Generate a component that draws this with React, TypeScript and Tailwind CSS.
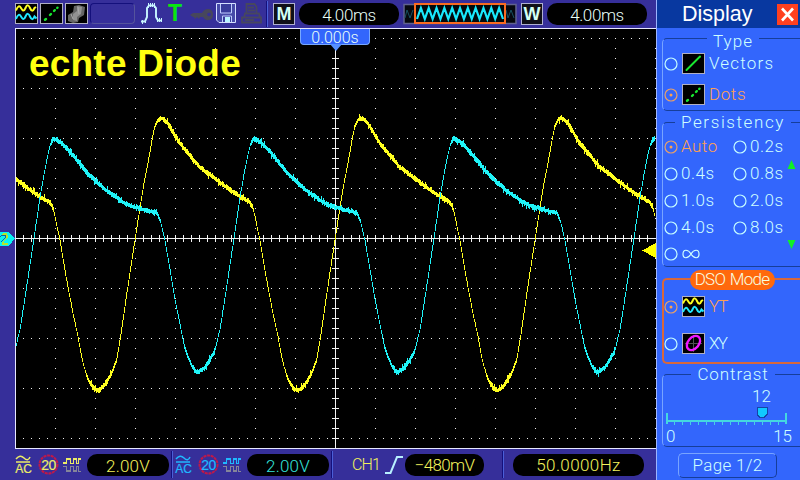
import type { ReactNode } from 'react';

type Point = [number, number];

const LCD = "font-['Roboto','Liberation_Sans',sans-serif] font-light leading-none whitespace-nowrap";

const YELLOW: Point[] = [
  [-40, 118], [-37, 118], [-32, 123], [-20, 143], [0, 167], [15, 178], [28, 188], [40, 196], [50, 202], [53, 207],
  [60, 240], [66, 276], [73, 313], [78, 336], [82, 358], [86, 373], [90, 382], [94, 388], [97, 390], [101, 388],
  [105, 384], [111, 374], [117, 358], [121, 334], [125, 306], [130, 272], [135, 240], [140, 207], [144, 183],
  [148, 163], [152, 140], [155, 125], [158, 119], [160, 118],
];

const CYAN: Point[] = [
  [-1, 371], [5, 367], [10, 359], [15, 350], [20, 329], [24, 304], [29, 271], [34, 238], [40, 197], [44, 174],
  [48, 154], [51, 142], [54, 138], [60, 141], [69, 150], [78, 161], [86, 171], [95, 180], [105, 189], [115, 196],
  [122, 201], [130, 205], [140, 208], [150, 211], [157, 212], [160, 219], [165, 240], [170, 269], [175, 299],
  [180, 324], [184, 344], [188, 356], [193, 367], [197, 372], [199, 371],
];

function sample(points: Point[], x: number): number {
  const start = points[0][0];
  const t = ((((x - start) % 200) + 200) % 200) + start;
  for (let i = 1; i < points.length; i++) {
    const [x0, y0] = points[i - 1];
    const [x1, y1] = points[i];
    if (t <= x1) return y0 + ((y1 - y0) * (t - x0)) / (x1 - x0);
  }
  return points[points.length - 1][1];
}

// Each pixel column becomes a vertical bar: thick and noisy where the signal
// is slow, thin with gaps where it is steep.
function trace(points: Point[], seed: number): string {
  let s = seed;
  const rnd = () => {
    s = (s * 1103515245 + 12345) % 2147483648;
    return s / 2147483648;
  };
  let d = '';
  for (let x = 16; x < 655; x++) {
    const a = sample(points, x);
    const b = sample(points, x + 1);
    const slope = Math.abs(b - a);
    let top = Math.round(Math.min(a, b));
    let bottom = Math.round(Math.max(a, b));
    if (slope < 2) {
      top -= 1 + Math.floor(rnd() * 1.8);
      bottom += 2 + Math.floor(rnd() * 1.6);
      if (rnd() > 0.9) top -= 2;
      if (rnd() > 0.9) bottom += 2;
    } else if (slope < 3.5) {
      bottom += 2;
    } else if (rnd() > 0.5) {
      top += 1;
    }
    if (bottom <= top) bottom = top + 1;
    d += `M${x} ${top}h1V${bottom}h-1z`;
  }
  return d;
}

const rowsY = [38, 88, 138, 188, 288, 338, 388, 438];
const colsX = Array.from({ length: 16 }, (_, i) => 55 + i * 40).filter((x) => x !== 335);
let grid = '';
rowsY.forEach((y) => {
  for (let x = 23; x < 655; x += 8) grid += `M${x} ${y}h1v1h-1z`;
});
colsX.forEach((x) => {
  for (let y = 48; y < 447; y += 10) grid += `M${x} ${y}h1v1h-1z`;
});
let axes = 'M16 238h640v1h-640zM335 50h1v398h-1z';
for (let x = 23; x < 655; x += 8) axes += `M${x} 235h1v7h-1z`;
for (let y = 58; y < 447; y += 10) axes += `M332 ${y}h7v1h-7z`;

const YELLOW_PATH = trace(YELLOW, 17);
const CYAN_PATH = trace(CYAN, 91);

function Scope() {
  return (
    <svg width="656" height="421" viewBox="0 28 656 421" shapeRendering="crispEdges" className="block">
      <rect x="0" y="28" width="656" height="421" fill="#362f9a" />
      <rect x="15" y="28" width="641" height="421" fill="#e8e8ff" />
      <rect x="16" y="29" width="640" height="419" fill="#000" />
      <path d={grid} fill="#f0f0f0" />
      <path d={axes} fill="#f4f4f4" />
      <path d={YELLOW_PATH} fill="#ffff20" />
      <path d={CYAN_PATH} fill="#20f4f8" />
      <path d="M656 243v15l-14-7.5z" fill="#ff0" />
      <path d="M0 232h9l6 6.5-6 7H0z" fill="#08f4f4" />
      <path d="M1 236l2-2h3l1 2v2l-4 4v2h5" fill="none" stroke="#b5e52c" strokeWidth="1.4" />
      <path d="M0 237l2-2h3v3l-4 4" fill="none" stroke="#17639a" strokeWidth="1" />
    </svg>
  );
}

function IconBox({ children }: { children?: ReactNode }) {
  return (
    <svg width="23" height="21" viewBox="0 0 23 21" className="block shrink-0">
      <rect x=".5" y=".5" width="22" height="20" fill="#000" stroke="#b0b0c4" />
      {children}
    </svg>
  );
}

function WavesIcon() {
  return (
    <IconBox>
      <path d="M1 7.500C3 2.500 4.500 2.500 6 5s2.800 4 4.500 0 3.200-3 4.500 0 2.800 4 4.500 0L21 4" fill="none" stroke="#ff2" strokeWidth="2" />
      <path d="M1 16C3 11 4.500 11 6 13.500s2.800 4 4.500 0 3.200-3 4.500 0 2.800 4 4.500 0l2 2" fill="none" stroke="#20e8ff" strokeWidth="2" />
    </IconBox>
  );
}

function DotsIcon() {
  return (
    <IconBox>
      <path d="M5 16.800l1-.8M10 12l1-1M14 8l.8-.8M17.200 5l.3-.3" stroke="#18e830" strokeWidth="2.400" strokeLinecap="round" />
    </IconBox>
  );
}

function Pill({ className, children }: { className: string; children: ReactNode }) {
  return <div className={`flex h-[22px] shrink-0 items-center justify-center rounded-[10px] bg-black ${className}`}>{children}</div>;
}

function Separator({ className }: { className: string }) {
  return <div className={`w-[2px] shrink-0 border-l border-l-[#14107c] border-r border-r-[#4a5fd8] ${className}`} />;
}

function TopBar() {
  const zig = Array.from({ length: 23 }, (_, i) => `${i ? 'L' : 'M'}${14 + i * 3.91} ${i % 2 ? 5 : 16}`).join('');
  return (
    <div className="flex h-[28px] items-start bg-[#362f9a] pl-[15px] pt-[3px]">
      <WavesIcon />
      <div className="ml-[2px]"><DotsIcon /></div>
      <div className="ml-[2px]">
        <IconBox>
          <path d="M3 18v-6l5-3 1-6 5-1 6 2-1 8-5 3-1 4-5 1z" fill="#666" />
          <path d="M8 17v-6l4-3V3l5 1-1 7-4 3v4z" fill="#929292" />
          <path d="M6 11l2 5M13 4l1 7" stroke="#aaa" strokeWidth="1" />
        </IconBox>
      </div>
      <div className="ml-[2px] h-[21px] w-[45px] rounded border border-[#14107c] border-b-[#55549c] border-r-[#55549c]" />
      <svg width="22" height="22" viewBox="0 0 22 22" className="ml-[6px] block">
        <path d="M0 18.500h4L6 14V5l2-2.500h5L15 5v9l2 3.500h4" fill="none" stroke="#c8f6ff" strokeWidth="1.900" />
        <path d="M1.500 17v4M4.500 16v4M7.500 0v5M9.500 0v4M11.500 0v4M13.500 0v5M16.500 15v4M18.500 15v4M20.500 15v4" fill="none" stroke="#c8f6ff" strokeWidth="1" />
      </svg>
      <div className="ml-[3px] w-[18px] text-center font-['Liberation_Sans',sans-serif] text-[23px] font-bold leading-[21px] text-[#08e810]">T</div>
      <svg width="24" height="15" viewBox="0 0 24 15" className="ml-[6px] mt-[4px] block">
        <path d="M12 6H3L0 8l3 2h1l1 2 2-2 2 2 1-2h3q2 4 5 3 5 0 5-5.500t-5-5.500q-4 0-6 4z" fill="#47475c" />
        <circle cx="19" cy="7.500" r="1.800" fill="#362f9a" />
      </svg>
      <svg width="21" height="21" viewBox="0 0 21 21" className="ml-[2px] block">
        <path d="M.5.5h19v19H3l-2.500-2.500z" fill="#464aa8" stroke="#d4dfff" />
        <path d="M4.500 1v9h11V1M6.500 19v-6h9v6" fill="#383b9b" stroke="#c0ceff" />
        <path d="M9 14h5v5H9z" fill="#b8f4ff" />
      </svg>
      <svg width="22" height="21" viewBox="0 0 22 21" className="ml-[4px] block">
        <path d="M5.500 10V1h8l2 3v6M7 4.500h6M7 7.500h7M4 10.500h14l1 4H3zM1 14.500h19v5H1zM4 17h9" fill="none" stroke="#47475f" strokeWidth="1.800" />
      </svg>
      <Separator className="-mt-[2px] ml-[3px] h-[26px]" />
      <div className="ml-[5px] flex h-[22px] w-[22px] items-center justify-center border border-[#b0b0d0] bg-[#101018] font-['Liberation_Sans',sans-serif] text-[18px] font-bold leading-none text-[#d4fff4]">M</div>
      <Pill className="ml-[4px] w-[100px]"><span className={`${LCD} mt-[2px] text-[17px] tracking-[-0.400px] text-[#e8fff8]`}>4.00ms</span></Pill>
      <svg width="114" height="22" viewBox="0 0 114 22" className="ml-[4px] block">
        <rect x="1" y="1.500" width="112" height="19" fill="#06080e" stroke="#60628f" strokeWidth="1.500" />
        <path d="M2 15l2-8 3 8 3-8M103 7l2 8 3-8 3 8" stroke="#175060" fill="none" />
        <rect x="12" y="1" width="90" height="19" fill="#02090c" />
        <path d={zig} stroke="#18e8fc" strokeWidth="2.200" fill="none" />
        <rect x="12" y="1" width="90" height="19" fill="none" stroke="#fa6b20" strokeWidth="2" />
      </svg>
      <div className="ml-[4px] flex h-[22px] w-[22px] items-center justify-center border border-[#b0b0d0] bg-[#101018] font-['Liberation_Sans',sans-serif] text-[18px] font-bold leading-none text-[#d4fff4]">W</div>
      <Pill className="ml-[4px] w-[100px]"><span className={`${LCD} mt-[2px] text-[17px] tracking-[-0.400px] text-[#e8fff8]`}>4.00ms</span></Pill>
    </div>
  );
}

function ChannelIcons({ color }: { color: string }) {
  return (
    <>
      <div className="flex w-[17px] shrink-0 flex-col items-center" style={{ color }}>
        <svg width="17" height="8" viewBox="0 0 17 8" className="block">
          <path d="M1 4q4-5 8-1t6-1M1 7h14" fill="none" stroke="currentColor" strokeWidth="1.500" />
        </svg>
        <span className="font-['Liberation_Sans',sans-serif] text-[12px] leading-[12px] [-webkit-text-stroke:0.200px]">AC</span>
      </div>
      <div className="relative ml-[6px] flex h-[21px] w-[21px] shrink-0 items-center justify-center" style={{ color }}>
        <svg width="21" height="21" viewBox="0 0 21 21" className="absolute inset-0">
          <circle cx="10.500" cy="10.500" r="9" fill="none" stroke="#c01848" strokeWidth="2" strokeDasharray="3 .7" />
        </svg>
        <span className="relative font-['Liberation_Sans',sans-serif] text-[14px] leading-none tracking-[-0.500px] [-webkit-text-stroke:0.200px]">20</span>
      </div>
      <svg width="18" height="16" viewBox="0 0 18 16" className="ml-[4px] block shrink-0" shapeRendering="crispEdges">
        <path d="M0 6.500h3.500v-5h4v5h3v-5h3v5h2v-5h2.500" fill="none" stroke={color} strokeWidth="1" />
        <path d="M0 5.500h3.500M3.500 2.500h4M10.500 2.500h3M15.500 2.500h2.500" stroke={color} strokeWidth="1" />
        <path d="M0 9.500h3.500v5h4v-5h3v5h3v-5h2v5h2.500M3.500 13.500h4M10.500 13.500h3" fill="none" stroke="#85859a" strokeWidth="1" />
      </svg>
    </>
  );
}

function BottomBar() {
  return (
    <div className="flex h-[31px] items-center bg-[#362f9a] pl-[15px]">
      <ChannelIcons color="#ecec68" />
      <Pill className="ml-[6px] w-[82px]"><span className={`${LCD} mt-[3px] text-[17px] tracking-[0.200px] text-[#f4f45c]`}>2.00V</span></Pill>
      <Separator className="ml-[2px] h-[27px]" />
      <div className="w-[2px] shrink-0" />
      <ChannelIcons color="#20b8ff" />
      <Pill className="ml-[6px] w-[82px]"><span className={`${LCD} mt-[3px] text-[17px] tracking-[0.200px] text-[#34e4dc]`}>2.00V</span></Pill>
      <Separator className="ml-[2px] h-[27px]" />
      <span className={`${LCD} ml-[19px] w-[33px] text-[16px] tracking-[-0.800px] text-[#f4f45c]`}>CH1</span>
      <svg width="19" height="20" viewBox="0 0 19 20" className="block shrink-0">
        <path d="M0 18h5.500L12 2h6" fill="none" stroke="#b8f0ff" strokeWidth="2" />
      </svg>
      <Pill className="ml-px w-[79px]"><span className={`${LCD} mt-px text-[17px] tracking-[-0.700px] text-[#f4f45c]`}>−480mV</span></Pill>
      <Separator className="ml-[18px] h-[27px]" />
      <Pill className="ml-[9px] w-[131px]"><span className={`${LCD} mt-px text-[17px] tracking-[0.400px] text-[#f4f45c]`}>50.0000Hz</span></Pill>
    </div>
  );
}

function Radio({ on = false }: { on?: boolean }) {
  return (
    <svg width="14" height="14" viewBox="0 0 14 14" className="block shrink-0">
      <circle cx="7" cy="7" r="6" fill="none" stroke={on ? '#e8a068' : '#c4fcff'} strokeWidth="1.200" />
      {on && <circle cx="7" cy="7" r="1.500" fill="#ffa050" />}
    </svg>
  );
}

function Section({ title, className, titleClass, children }: { title: string; className: string; titleClass: string; children: ReactNode }) {
  return (
    <section className={`ml-[5px] rounded-l-[5px] border-y border-l border-l-[#78a4ff] border-b-[#163e9a] border-t-[#163e9a] ${className}`}>
      <div className="-mt-[9px] flex h-[19px] justify-center pl-[3px]">
        <h2 className={`${LCD} h-[20px] bg-[#3366fc] px-[6px] text-[17px] text-[#d0ffff] ${titleClass}`}>{title}</h2>
      </div>
      {children}
    </section>
  );
}

const LABEL = `${LCD} text-[17px] tracking-[0.500px]`;

function PersistOption({ label, on = false }: { label: string; on?: boolean }) {
  return (
    <div className="flex h-[27px] items-center gap-[3px]">
      <Radio on={on} />
      <span className={`${LABEL} ${on ? 'text-[#ffa050]' : 'text-[#d0ffff]'}`}>{label}</span>
    </div>
  );
}

function Panel() {
  return (
    <aside className="flex h-[480px] w-[144px] shrink-0 flex-col overflow-hidden border-l border-l-[#9cb4ff] bg-[#3366fc]">
      <header className="flex h-[28px] shrink-0 items-center bg-[#0838a0] pl-[25px]">
        <h1 className="mt-[2px] w-[95px] font-['Liberation_Sans',sans-serif] text-[21.500px] leading-none text-white">Display</h1>
        <div className="flex h-[21px] w-[21px] items-center justify-center bg-[#ff4020]">
          <svg width="15" height="15" viewBox="0 0 15 15"><path d="M2 1.500l11 12M13 1.500l-11 12" stroke="#fff" strokeWidth="2.600" /></svg>
        </div>
      </header>
      <Section title="Type" titleClass="pt-[3px] tracking-[1px]" className="mt-[10px] h-[73px] shrink-0">
        <div className="flex flex-col gap-[10px] pl-px pt-[4px]">
          <div className="flex h-[21px] items-center">
            <Radio />
            <div className="ml-[4px] mr-[4px]"><IconBox><path d="M4.500 17L18 3.500" stroke="#18e830" strokeWidth="2" strokeLinecap="round" /></IconBox></div>
            <span className={`${LCD} text-[17px] tracking-[1.200px] text-[#d0ffff]`}>Vectors</span>
          </div>
          <div className="flex h-[21px] items-center">
            <Radio on />
            <div className="ml-[4px] mr-[4px]"><DotsIcon /></div>
            <span className={`${LCD} text-[17px] tracking-[0.600px] text-[#ffa050]`}>Dots</span>
          </div>
        </div>
      </Section>
      <Section title="Persistency" titleClass="tracking-[1.600px]" className="mt-[11px] h-[145px] shrink-0">
        <div className="flex pl-px">
          <div className="w-[69px]">
            <PersistOption label="Auto" on />
            <PersistOption label="0.4s" />
            <PersistOption label="1.0s" />
            <PersistOption label="4.0s" />
            <div className="flex h-[26px] items-center gap-[4px]">
              <Radio />
              <svg width="18" height="10" viewBox="0 0 18 10"><path d="M9 5C6 0 1 0 1 5s5 5 8 0 8-5 8 0-5 5-8 0" fill="none" stroke="#d0ffff" strokeWidth="1.200" /></svg>
            </div>
          </div>
          <div className="w-[54px]">
            <PersistOption label="0.2s" />
            <PersistOption label="0.8s" />
            <PersistOption label="2.0s" />
            <PersistOption label="8.0s" />
          </div>
          <svg width="9" height="90" viewBox="0 0 9 90" className="mt-[27px] block shrink-0">
            <path d="M4.500 0l4 9h-8zM.5 80h8l-4 9z" fill="#10f028" />
          </svg>
        </div>
      </Section>
      <section className="ml-[5px] mt-[11px] h-[86px] shrink-0 rounded-l-[5px] border-y-2 border-l-2 border-[#d8683c]">
        <div className="-mt-[10px] flex justify-center">
          <h2 className={`${LCD} h-[20px] w-[85px] rounded-full bg-[#ff690c] pt-px text-center text-[17px] tracking-[-0.700px] text-[#f8ffe0] [word-spacing:1px]`}>DSO Mode</h2>
        </div>
        <div className="flex flex-col gap-[16px] pt-[6px]">
          <div className="flex h-[21px] items-center">
            <Radio on />
            <div className="ml-[4px] mr-[4px]"><WavesIcon /></div>
            <span className={`${LCD} text-[17px] tracking-[-1px] text-[#ffa050]`}>YT</span>
          </div>
          <div className="flex h-[21px] items-center">
            <Radio />
            <div className="ml-[4px] mr-[4px]">
              <IconBox>
                <path d="M11.500 2v17M3 10.500h17" stroke="#505050" />
                <ellipse cx="11.500" cy="10" rx="8" ry="5.500" transform="rotate(-50 11.500 10)" fill="none" stroke="#ef18ff" strokeWidth="2.400" />
              </IconBox>
            </div>
            <span className={`${LCD} text-[17px] tracking-[-1.600px] text-[#d0ffff]`}>XY</span>
          </div>
        </div>
      </section>
      <Section title="Contrast" titleClass="tracking-[0.900px]" className="mt-[10px] h-[73px] shrink-0">
        <div className={`${LCD} mt-[3px] pl-[89px] text-[17px] text-[#d0ffff]`}>12</div>
        <svg width="124" height="19" viewBox="0 0 124 19" className="mt-px ml-[3px] block" shapeRendering="crispEdges">
          <path d="M0 15h121M1 7v11M120 7v11" stroke="#44d8e0" strokeWidth="2" />
          <path d={Array.from({ length: 14 }, (_, i) => `M${8.5 + i * 8} 15v4`).join('')} stroke="#44cfe6" strokeWidth="1" />
          <path d="M92 1.500h9v7l-3 3h-4l-3-3v-7z" fill="#10c8ff" stroke="#1545a8" />
        </svg>
        <div className={`${LCD} mt-[3px] flex justify-between pl-[3px] pr-[8px] text-[17px] text-[#d0ffff]`}>
          <span>0</span><span>15</span>
        </div>
      </Section>
      <div className={`${LCD} ml-[21px] mt-[6px] flex h-[25px] w-[99px] shrink-0 items-center justify-center rounded-[5px] border border-[#78a4ff] border-b-[#163e9a] border-r-[#163e9a] text-[17px] tracking-[0.300px] text-[#d0ffff]`}>Page 1/2</div>
    </aside>
  );
}

export default function App() {
  return (
    <main className="flex h-[480px] w-[800px] overflow-hidden bg-[#362f9a]">
      <div className="flex w-[656px] shrink-0 flex-col">
        <TopBar />
        <div className="relative">
          <Scope />
          <div className="absolute left-[29px] top-[16px] whitespace-nowrap font-['Liberation_Sans',sans-serif] text-[37px] font-bold leading-[40px] tracking-[0.200px] text-[#ffff10]">echte Diode</div>
          <div className={`${LCD} absolute left-[300px] top-px h-[16px] w-[70px] rounded-b-[4px] border border-t-0 border-[#78a8ff] bg-[#3366fc] pt-px text-center text-[16px] text-[#e8fff8]`}>0.000s</div>
          <svg width="12" height="8" viewBox="0 0 12 8" className="absolute left-[330px] top-[16px]"><path d="M0 0h12L6 7z" fill="#5590ff" /></svg>
        </div>
        <BottomBar />
      </div>
      <Panel />
    </main>
  );
}
